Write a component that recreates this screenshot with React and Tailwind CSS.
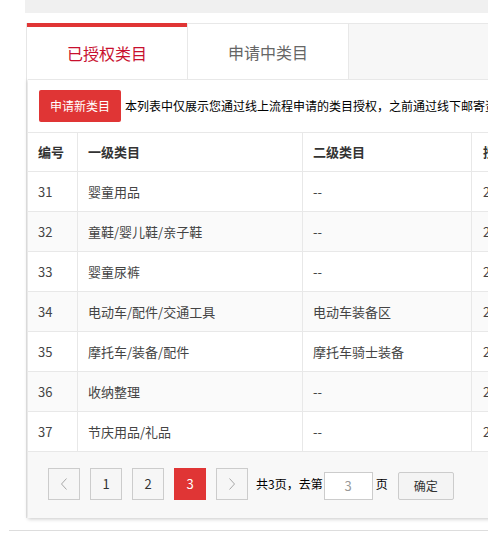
import React from 'react'

const rows = [
  { id: 31, first: '婴童用品', second: '--' },
  { id: 32, first: '童鞋/婴儿鞋/亲子鞋', second: '--' },
  { id: 33, first: '婴童尿裤', second: '--' },
  { id: 34, first: '电动车/配件/交通工具', second: '电动车装备区' },
  { id: 35, first: '摩托车/装备/配件', second: '摩托车骑士装备' },
  { id: 36, first: '收纳整理', second: '--' },
  { id: 37, first: '节庆用品/礼品', second: '--' },
]

const Chevron = ({ dir }) => (
  <svg width="8" height="14" viewBox="0 0 8 14" fill="none">
    <path
      d={dir === 'left' ? 'M6.5 1.5 1.5 7l5 5.5' : 'M1.5 1.5 6.5 7l-5 5.5'}
      stroke="#a8a8a8"
      strokeWidth="1"
    />
  </svg>
)

const PageBtn = ({ children, active }) => (
  <div
    className={
      active
        ? 'w-[32px] h-[32px] flex items-center justify-center bg-[#e03535] text-white text-[13px]'
        : 'w-[32px] h-[32px] flex items-center justify-center border border-[#cccccc] bg-[#f6f6f6] text-[#333] text-[13px]'
    }
  >
    {children}
  </div>
)

const App = () => {
  return (
    <div className="w-[488px] h-[535px] overflow-hidden bg-white font-['Noto_Sans_CJK_SC','Microsoft_YaHei',sans-serif] text-[#333]">
      {/* top bar */}
      <div className="ml-[25px] h-[13px] bg-[#f0f0f0]" />

      {/* card */}
      <div className="ml-[26px] mt-[10px] w-[720px] border-l border-[#e6e6e6]">
        {/* tabs */}
        <div className="flex h-[56px]">
          <div className="w-[160px] border-t-4 border-[#e03535] bg-white flex items-center justify-center text-[16px] text-[#c8102e]">
            已授权类目
          </div>
          <div className="w-[162px] border-t border-l border-r border-[#e8e8e8] bg-white flex items-center justify-center text-[16px] text-[#666]">
            申请中类目
          </div>
          <div className="flex-1 border-t border-[#e8e8e8] bg-[#f7f7f7]" />
        </div>

        {/* content */}
        <div className="ml-[1px] border-t border-[#e8e8e8] bg-white shadow-[0_1px_4px_rgba(0,0,0,0.22)]">
          <div className="flex items-center h-[52px] pl-[11px]">
            <div className="w-[82px] h-[32px] rounded-[2px] bg-[#e03535] text-white text-[12px] flex items-center justify-center">
              申请新类目
            </div>
            <div className="ml-[4px] text-[12px] text-black whitespace-nowrap">
              本列表中仅展示您通过线上流程申请的类目授权，之前通过线下邮寄资质申请的类目授权请联系客服查询。
            </div>
          </div>

          {/* table */}
          <div className="border-t border-[#e8e8e8]">
            <div className="grid grid-cols-[50px_225px_169px_230px] h-[39px] border-b border-[#e8e8e8] text-[13px] font-bold text-[#333]">
              <div className="border-r border-[#e8e8e8] pl-[10px] flex items-center">编号</div>
              <div className="border-r border-[#e8e8e8] pl-[10px] flex items-center">一级类目</div>
              <div className="border-r border-[#e8e8e8] pl-[10px] flex items-center">二级类目</div>
              <div className="pl-[11px] flex items-center whitespace-nowrap">授权时间</div>
            </div>
            {rows.map((r, i) => (
              <div
                key={r.id}
                className={`grid grid-cols-[50px_225px_169px_230px] h-[40px] border-b border-[#e8e8e8] text-[13px] text-[#444] ${
                  i % 2 === 1 ? 'bg-[#fafafa]' : 'bg-white'
                }`}
              >
                <div className="border-r border-[#e8e8e8] pl-[10px] flex items-center">{r.id}</div>
                <div className="border-r border-[#e8e8e8] pl-[10px] flex items-center">{r.first}</div>
                <div className="border-r border-[#e8e8e8] pl-[10px] flex items-center">{r.second}</div>
                <div className="pl-[11px] flex items-center whitespace-nowrap">2019-06-12 10:21:36</div>
              </div>
            ))}
          </div>

          {/* pagination */}
          <div className="h-[66px] bg-[#f8f8f8] pl-[20px] pt-[16px] flex items-start">
            <div className="flex items-center gap-[10px]">
              <PageBtn><Chevron dir="left" /></PageBtn>
              <PageBtn>1</PageBtn>
              <PageBtn>2</PageBtn>
              <PageBtn active>3</PageBtn>
              <PageBtn><Chevron dir="right" /></PageBtn>
            </div>
            <div className="flex items-center h-[32px] ml-[8px] text-[12px] text-black">
              <span>共3页，去第</span>
              <div className="ml-[1px] w-[49px] h-[28px] mt-[3px] border border-[#cccccc] bg-white flex items-center justify-center text-[13px] text-[#999]">
                3
              </div>
              <span className="ml-[3px]">页</span>
              <div className="ml-[10px] w-[56px] h-[28px] mt-[3px] border border-[#cccccc] rounded-[2px] bg-[#f4f4f4] flex items-center justify-center text-[12px] text-[#333]">
                确定
              </div>
            </div>
          </div>
        </div>
      </div>

      {/* next section edge */}
      <div className="ml-[9px] mt-[12px] border-t border-[#dddddd] h-[10px] bg-white" />
    </div>
  )
}

export default App
